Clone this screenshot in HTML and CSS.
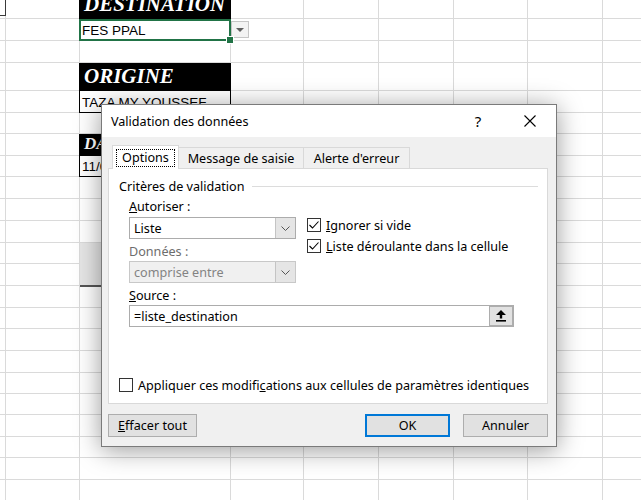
FILE: index.html
```html
<!DOCTYPE html>
<html lang="fr">
<head>
  <meta charset="UTF-8">
  <title>Validation des données</title>
  <link rel="stylesheet" href="styles.css">
</head>
<body>

  <!-- FEUILLE EXCEL -->
  <div class="sheet">
    <div class="row h29"><div class="cell hdr">DESTINATION</div></div>
    <div class="row">
      <div class="cell sel">FES PPAL<span class="dd-btn"></span></div>
    </div>
    <div class="row"></div>
    <div class="row h28"><div class="cell hdr">ORIGINE</div></div>
    <div class="row"><div class="cell boxed">TAZA MY YOUSSEF</div></div>
    <div class="row h21"></div>
    <div class="row"><div class="cell hdr hdr-sm">DATE</div></div>
    <div class="row h21"><div class="cell boxed">11/05/2021</div></div>
    <div class="row"></div>
    <div class="row"></div>
    <div class="row"></div>
    <div class="row h21"></div>
    <div class="row"></div>
    <div class="row"></div>
    <div class="row h21"></div>
    <div class="row"></div>
    <div class="row"></div>
    <div class="row h21"></div>
    <div class="row h21"></div>
    <div class="row"></div>
    <div class="row h21"></div>
    <div class="row"></div>
    <div class="row h21"></div>
  </div>

  <!-- formes posées sur la feuille -->
  <div class="corner-box"></div>
  <div class="sheet-shape"></div>

  <!-- BOITE DE DIALOGUE -->
  <div class="dlg">
    <div class="dlg-title">
      <span>Validation des données</span>
      <span class="dlg-help">?</span>
      <span class="dlg-close">
        <svg width="12" height="12" viewBox="0 0 12 12"><path d="M0.5 0.5 L11.5 11.5 M11.5 0.5 L0.5 11.5" stroke="#000" stroke-width="1.1" fill="none"/></svg>
      </span>
    </div>

    <div class="dlg-body">
      <div class="tabs">
        <div class="tab tab-opt"><span class="focus">Options</span></div>
        <div class="tab tab-msg">Message de saisie</div>
        <div class="tab tab-err">Alerte d'erreur</div>
      </div>

      <div class="panel">
        <div class="group-head"><span>Critères de validation</span><span class="rule"></span></div>

        <div class="criteria">
          <div class="crit-row">
            <div class="crit-left">
              <span class="lbl"><u>A</u>utoriser :</span>
              <div class="combo">
                <span>Liste</span>
                <span class="combo-btn"><svg width="9" height="5" viewBox="0 0 9 5"><path d="M0.5 0.5 L4.5 4.5 L8.5 0.5" stroke="#555" fill="none"/></svg></span>
              </div>
              <span class="lbl lbl-off">Données :</span>
              <div class="combo combo-off">
                <span>comprise entre</span>
                <span class="combo-btn"><svg width="9" height="5" viewBox="0 0 9 5"><path d="M0.5 0.5 L4.5 4.5 L8.5 0.5" stroke="#555" fill="none"/></svg></span>
              </div>
            </div>
            <div class="crit-right">
              <div class="chk-row">
                <span class="chk"><svg width="12" height="12" viewBox="0 0 12 12"><path d="M1.5 6 L4.5 9 L10.5 2.5" stroke="#000" stroke-width="1.1" fill="none"/></svg></span>
                <span><u>I</u>gnorer si vide</span>
              </div>
              <div class="chk-row">
                <span class="chk"><svg width="12" height="12" viewBox="0 0 12 12"><path d="M1.5 6 L4.5 9 L10.5 2.5" stroke="#000" stroke-width="1.1" fill="none"/></svg></span>
                <span><u>L</u>iste déroulante dans la cellule</span>
              </div>
            </div>
          </div>

          <span class="lbl lbl-src"><u>S</u>ource :</span>
          <div class="source">
            <span>=liste_destination</span>
            <span class="ref-btn"><svg width="10" height="12" viewBox="0 0 10 12"><path d="M5 0 L10 5 L6.2 5 L6.2 8.5 L3.8 8.5 L3.8 5 L0 5 Z" fill="#000"/><rect x="0" y="10" width="10" height="1.6" fill="#000"/></svg></span>
          </div>
        </div>

        <div class="chk-row apply">
          <span class="chk"></span>
          <span>Appliquer ces modifi<u>c</u>ations aux cellules de paramètres identiques</span>
        </div>
      </div>

      <div class="dlg-buttons">
        <button class="btn btn-clear"><u>E</u>ffacer tout</button>
        <button class="btn btn-ok">OK</button>
        <button class="btn">Annuler</button>
      </div>
    </div>
  </div>

</body>
</html>
```

FILE: styles.css
```css
/* RESET */
* {
  margin: 0;
  padding: 0;
  box-sizing: border-box;
}
body {
  width: 641px;
  height: 500px;
  overflow: hidden;
  position: relative;
  background: #fff;
  font-family: "Liberation Sans", Arial, sans-serif;
  color: #000;
}
u {
  text-decoration: underline;
  text-underline-offset: 1px;
}

/* ----- FEUILLE ----- */
.sheet {
  margin-top: -10px;
  width: 641px;
  background-image:
    linear-gradient(#dadada, #dadada), linear-gradient(#dadada, #dadada),
    linear-gradient(#dadada, #dadada), linear-gradient(#dadada, #dadada),
    linear-gradient(#dadada, #dadada), linear-gradient(#dadada, #dadada),
    linear-gradient(#dadada, #dadada), linear-gradient(#dadada, #dadada);
  background-repeat: no-repeat;
  background-size: 1px 100%;
  background-position: 5px 0, 79px 0, 230px 0, 303px 0, 378px 0, 453px 0, 527px 0, 602px 0;
}
.row {
  height: 22px;
  border-bottom: 1px solid #dadada;
  display: flex;
}
.row.h21 { height: 21px; }
.row.h28 { height: 28px; }
.row.h29 { height: 29px; }

.cell {
  position: relative;
  margin-left: 79px;
  width: 152px;
  height: calc(100% + 1px);
  display: flex;
  align-items: flex-end;
  white-space: nowrap;
  font-size: 13.5px;
  line-height: 15px;
  padding: 0 0 3px 3px;
}
.hdr {
  background: #000;
  color: #fff;
  overflow: hidden;
  font-family: "Liberation Serif", "Times New Roman", serif;
  font-style: italic;
  font-weight: bold;
  font-size: 21px;
  line-height: 21px;
  padding: 0 0 4px 5px;
}
.hdr-sm {
  font-size: 17px;
  line-height: 17px;
}
.boxed {
  border: 1px solid #000;
  border-top: none;
  padding: 0 0 2px 2px;
}
.sel {
  box-shadow: inset 0 0 0 2px #217346;
  z-index: 1;
}
.sel::after {
  content: "";
  position: absolute;
  right: -3px;
  bottom: -3px;
  width: 6px;
  height: 6px;
  background: #217346;
  border: 1px solid #fff;
}
.dd-btn {
  position: absolute;
  left: 100%;
  top: 2px;
  width: 18px;
  height: 17px;
  background: #f3f3f3;
  border: 1px solid #c6c6c6;
}
.dd-btn::after {
  content: "";
  position: absolute;
  left: 4px;
  top: 6px;
  border-left: 4px solid transparent;
  border-right: 4px solid transparent;
  border-top: 4px solid #5f5f5f;
}
.corner-box {
  position: absolute;
  left: -1px;
  top: -1px;
  width: 7px;
  height: 17px;
  border: 1px solid #3a3a3a;
}
.sheet-shape {
  position: absolute;
  left: 80px;
  top: 243px;
  width: 140px;
  height: 44px;
  background: #e6e6e6;
  border-bottom: 2px solid #555;
}

/* ----- BOITE DE DIALOGUE ----- */
.dlg {
  position: absolute;
  left: 101px;
  top: 104px;
  width: 456px;
  height: 343px;
  border: 1px solid #7a7a7a;
  background: #f0f0f0;
  box-shadow: 0 3px 24px rgba(0, 0, 0, 0.4);
  display: flex;
  flex-direction: column;
  font-family: "Segoe UI", "Noto Sans", sans-serif;
  font-size: 12.6px;
  color: #000;
}
.dlg-title {
  height: 32px;
  background: #fff;
  display: flex;
  align-items: center;
  padding-left: 9px;
}
.dlg-help {
  margin-left: auto;
  margin-right: 6px;
  width: 46px;
  text-align: center;
  font-size: 15px;
}
.dlg-close {
  width: 46px;
  height: 32px;
  margin-right: 3px;
  display: flex;
  align-items: center;
  justify-content: center;
}
.dlg-body {
  flex: 1;
  padding: 8px 8px 8px 6px;
  display: flex;
  flex-direction: column;
}

/* onglets */
.tabs {
  display: flex;
  align-items: flex-end;
  height: 23px;
  padding-left: 4px;
  position: relative;
  z-index: 1;
}
.tab {
  height: 21px;
  border: 1px solid #d9d9d9;
  border-bottom: none;
  margin-left: -1px;
  display: flex;
  align-items: center;
  justify-content: center;
  white-space: nowrap;
}
.tab-opt {
  width: 67px;
  height: 24px;
  margin-left: 0;
  margin-bottom: -1px;
  background: #fff;
}
.tab-msg { width: 126px; }
.tab-err { width: 107px; }
.focus {
  border: 1px dotted #000;
  padding: 0 5px;
  line-height: 16px;
  margin-top: 1px;
}

/* panneau options */
.panel {
  height: 236px;
  background: #fff;
  border: 1px solid #d9d9d9;
  display: flex;
  flex-direction: column;
  padding: 9px 9px 10px 10px;
}
.group-head {
  display: flex;
  align-items: center;
  height: 16px;
  white-space: nowrap;
}
.group-head .rule {
  flex: 1;
  height: 1px;
  background: #dcdcdc;
  margin-left: 7px;
}
.criteria {
  margin-left: 10px;
}
.crit-row {
  display: flex;
  margin-top: 5px;
}
.crit-left {
  width: 167px;
}
.lbl {
  display: block;
  line-height: 16px;
}
.lbl-off {
  color: #6d6d6d;
  margin-top: 5px;
}
.lbl-src {
  margin-top: 5px;
}
.combo {
  height: 22px;
  margin-top: 2px;
  border: 1px solid #acacac;
  background: #fff;
  display: flex;
  align-items: center;
  padding-left: 4px;
}
.combo-off {
  margin-top: 1px;
  background: #f0f0f0;
  border-color: #c8c8c8;
  color: #838383;
}
.combo-btn {
  margin-left: auto;
  width: 20px;
  height: 100%;
  background: #e5e5e5;
  border-left: 1px solid #c4c4c4;
  display: flex;
  align-items: center;
  justify-content: center;
}
.crit-right {
  margin-left: 11px;
  padding-top: 18px;
}
.chk-row {
  display: flex;
  align-items: center;
  height: 16px;
  white-space: nowrap;
}
.chk-row + .chk-row {
  margin-top: 5px;
}
.chk {
  width: 14px;
  height: 14px;
  border: 1px solid #333;
  background: #fff;
  margin-right: 5px;
  display: flex;
  align-items: center;
  justify-content: center;
}
.source {
  width: 385px;
  height: 22px;
  margin-top: 1px;
  border: 1px solid #acacac;
  background: #fff;
  display: flex;
  align-items: center;
  padding-left: 4px;
}
.ref-btn {
  margin-left: auto;
  width: 24px;
  height: 20px;
  background: #e1e1e1;
  border: 1px solid #adadad;
  display: flex;
  align-items: center;
  justify-content: center;
}
.apply {
  margin-top: auto;
}

/* boutons */
.dlg-buttons {
  display: flex;
  gap: 13px;
  margin-top: 10px;
}
.btn {
  height: 23px;
  width: 85px;
  border: 1px solid #adadad;
  background: #e1e1e1;
  font: inherit;
  color: #000;
}
.btn-clear {
  width: 89px;
  margin-right: auto;
}
.btn-ok {
  border-color: #0078d7;
  box-shadow: inset 0 0 0 1px #0078d7;
}
```
